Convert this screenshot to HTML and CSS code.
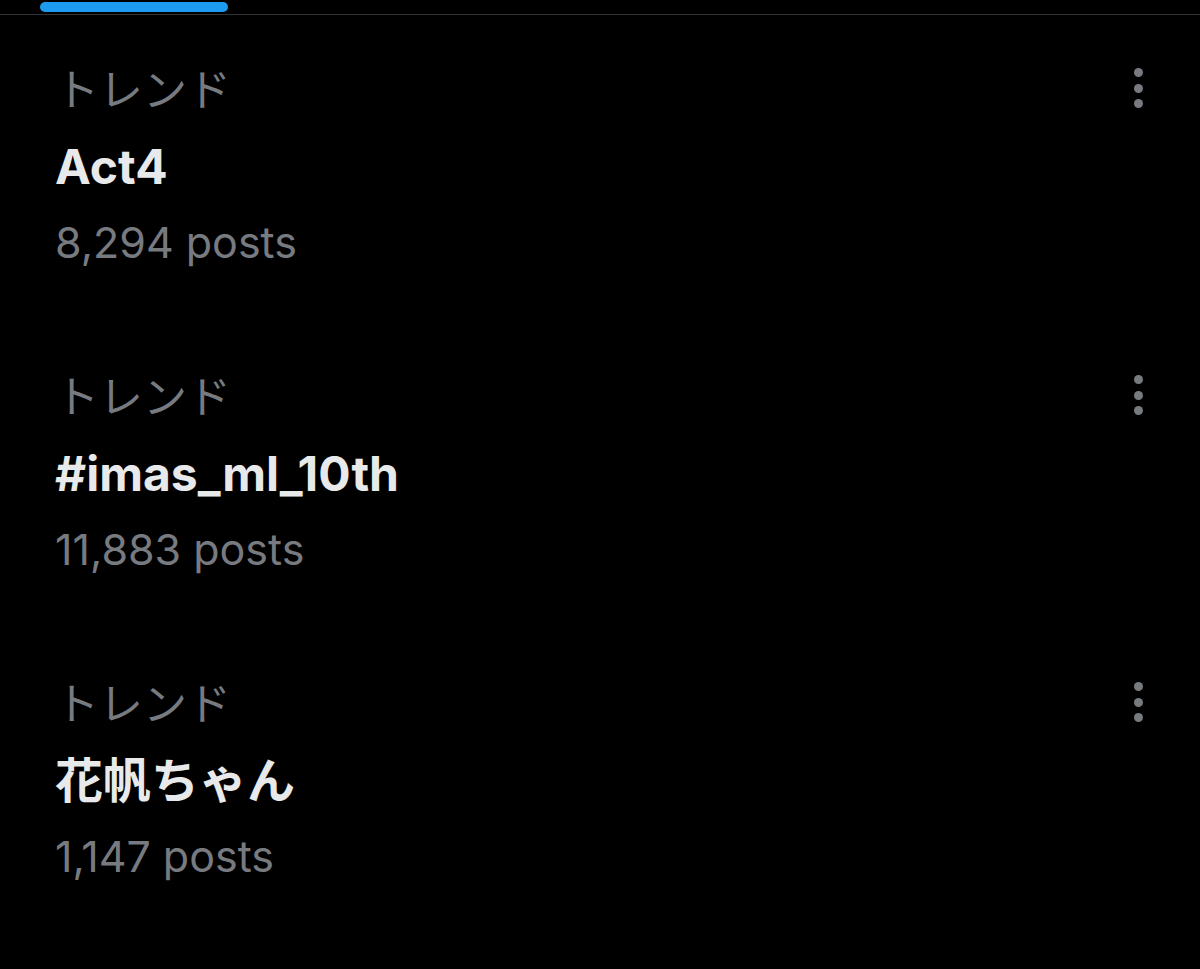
FILE: index.html
```html
<!DOCTYPE html>
<html lang="ja">
  <head>
    <meta charset="UTF-8" />
    <meta name="viewport" content="width=device-width, initial-scale=1" />
    <title>トレンド</title>
    <link rel="stylesheet" href="styles.css">
  </head>
  <body>
    <nav class="tabs">
      <span class="tab-indicator"></span>
    </nav>

    <main class="trends">
      <div class="trend">
        <div class="trend-body">
          <div class="trend-label">トレンド</div>
          <div class="trend-title">Act4</div>
          <div class="trend-count">8,294 posts</div>
        </div>
        <button class="more" aria-label="More"><i></i><i></i><i></i></button>
      </div>

      <div class="trend">
        <div class="trend-body">
          <div class="trend-label">トレンド</div>
          <div class="trend-title">#imas_ml_10th</div>
          <div class="trend-count">11,883 posts</div>
        </div>
        <button class="more" aria-label="More"><i></i><i></i><i></i></button>
      </div>

      <div class="trend">
        <div class="trend-body">
          <div class="trend-label">トレンド</div>
          <div class="trend-title">花帆ちゃん</div>
          <div class="trend-count">1,147 posts</div>
        </div>
        <button class="more" aria-label="More"><i></i><i></i><i></i></button>
      </div>
    </main>
  </body>
</html>
```

FILE: styles.css
```css
/* Reset */
* {
  margin: 0;
  padding: 0;
  box-sizing: border-box;
}

body {
  font-family: Inter, "Noto Sans CJK JP", sans-serif;
  background: #000;
  color: #e7e9ea;
  min-height: 100vh;
}

.tabs {
  height: 15px;
  padding: 2px 0 0 40px;
  border-bottom: 1px solid #2f3336;
}

.tab-indicator {
  display: block;
  width: 188px;
  height: 10px;
  border-radius: 5px;
  background: #1d9bf0;
}

.trend {
  display: flex;
  justify-content: space-between;
  align-items: flex-start;
  height: 307px;
  padding: 38px 57px 0 55px;
}

.trend-label {
  font-size: 44px;
  line-height: 75px;
  color: #777b80;
}

.trend-title {
  font-size: 48px;
  font-weight: 700;
  line-height: 78px;
}

.trend-count {
  font-size: 43px;
  line-height: 72px;
  color: #777b80;
}

button.more {
  display: flex;
  flex-direction: column;
  gap: 6.5px;
  margin-top: 15px;
  background: none;
  border: none;
  cursor: pointer;
}

button.more i {
  display: block;
  width: 9px;
  height: 9px;
  border-radius: 50%;
  background: #777b80;
}
```
